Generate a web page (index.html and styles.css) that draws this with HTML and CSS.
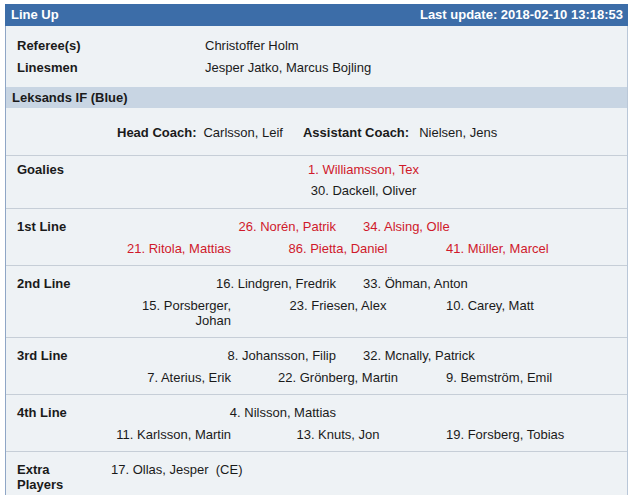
FILE: index.html
```html
<!DOCTYPE html>
<html>
<head>
<meta charset="utf-8">
<link rel="stylesheet" href="styles.css">
</head>
<body>
<div class="box">
  <div class="hdr"><span>Line Up</span><span>Last update: 2018-02-10 13:18:53</span></div>
  <div class="officials">
    <div class="orow"><span class="olbl">Referee(s)</span><span>Christoffer Holm</span></div>
    <div class="orow"><span class="olbl">Linesmen</span><span>Jesper Jatko, Marcus Bojling</span></div>
  </div>
  <div class="team">Leksands IF (Blue)</div>
  <div class="coaches">
    <span class="cl">Head Coach:</span><span class="cv">Carlsson, Leif</span>
    <span class="cl cl2">Assistant Coach:</span><span class="cv cv2">Nielsen, Jens</span>
  </div>
  <div class="sec goalies">
    <div class="lbl">Goalies</div>
    <div class="lines">
      <div class="rowc red">1. Williamsson, Tex</div>
      <div class="rowc">30. Dackell, Oliver</div>
    </div>
  </div>
  <div class="sec">
    <div class="lbl">1st Line</div>
    <div class="lines">
      <div class="rowa red"><span class="l">26. Norén, Patrik</span><span class="r">34. Alsing, Olle</span></div>
      <div class="rowb red"><span class="a">21. Ritola, Mattias</span><span class="b">86. Pietta, Daniel</span><span class="c">41. Müller, Marcel</span></div>
    </div>
  </div>
  <div class="sec">
    <div class="lbl">2nd Line</div>
    <div class="lines">
      <div class="rowa"><span class="l">16. Lindgren, Fredrik</span><span class="r">33. Öhman, Anton</span></div>
      <div class="rowb"><span class="a">15. Porsberger, Johan</span><span class="b">23. Friesen, Alex</span><span class="c">10. Carey, Matt</span></div>
    </div>
  </div>
  <div class="sec">
    <div class="lbl">3rd Line</div>
    <div class="lines">
      <div class="rowa"><span class="l">8. Johansson, Filip</span><span class="r">32. Mcnally, Patrick</span></div>
      <div class="rowb"><span class="a">7. Aterius, Erik</span><span class="b">22. Grönberg, Martin</span><span class="c">9. Bemström, Emil</span></div>
    </div>
  </div>
  <div class="sec">
    <div class="lbl">4th Line</div>
    <div class="lines">
      <div class="rowa"><span class="l">4. Nilsson, Mattias</span><span class="r"></span></div>
      <div class="rowb"><span class="a">11. Karlsson, Martin</span><span class="b">13. Knuts, Jon</span><span class="c">19. Forsberg, Tobias</span></div>
    </div>
  </div>
  <div class="sec extra">
    <div class="lbl xlbl">Extra Players</div>
    <div class="xval">17. Ollas, Jesper&nbsp; (CE)</div>
  </div>
</div>
</body>
</html>
```

FILE: styles.css
```css
html, body {
  margin: 0;
  padding: 0;
  background: #ffffff;
}
body {
  font-family: "Liberation Sans", Arial, sans-serif;
  font-size: 13px;
  color: #1a1a1a;
}
.box {
  margin: 4px 0 0 5px;
  width: 623px;
  box-sizing: border-box;
  background: #eef2f5;
  border-left: 1px solid #8fa6c6;
  border-right: 1px solid #b9c7d8;
  min-height: 491px;
}
.hdr {
  display: flex;
  justify-content: space-between;
  height: 22px;
  line-height: 22px;
  background: #3c6da8;
  color: #ffffff;
  font-weight: bold;
  padding: 0 5px 0 6px;
  margin-left: -1px;
  margin-right: -1px;
}
.officials {
  padding: 9px 0 8px 11px;
}
.orow {
  display: flex;
  line-height: 16px;
  padding: 3px 0;
}
.olbl {
  width: 188px;
  flex: none;
  font-weight: bold;
}
.team {
  height: 21px;
  line-height: 21px;
  background: #c8d5e3;
  font-weight: bold;
  padding-left: 6px;
}
.coaches {
  display: flex;
  padding: 14px 0 11px 111px;
  line-height: 16px;
}
.coaches > span {
  padding: 3px 0;
}
.cl {
  font-weight: bold;
}
.cv {
  margin-left: 7px;
}
.cl2 {
  margin-left: 20px;
}
.cv2 {
  margin-left: 10px;
}
.sec {
  display: flex;
  border-top: 1px solid #c6ced7;
  padding: 7px 0 6px 11px;
}
.goalies {
  padding-top: 3px;
  padding-bottom: 7px;
}
.extra {
  padding-bottom: 7px;
}
.lbl {
  width: 83px;
  flex: none;
  font-weight: bold;
  line-height: 15px;
  padding-top: 3px;
}
.lines {
  flex: 1;
}
.lines > div {
  line-height: 15px;
}
.rowc {
  text-align: center;
  padding: 3px 0;
}
.rowa {
  display: grid;
  grid-template-columns: 249px 1fr;
}
.rowa > span {
  padding: 3px 0 4px;
}
.rowa .l {
  text-align: right;
  padding-right: 13px;
}
.rowa .r {
  padding-left: 14px;
}
.rowb {
  display: grid;
  grid-template-columns: 141px 194px 1fr;
}
.rowb > span {
  padding: 3px 0;
}
.rowb .a {
  text-align: right;
  padding: 3px 10px;
}
.rowb .b {
  text-align: center;
}
.rowb .c {
  padding-left: 11px;
}
.red {
  color: #d0192b;
}
.xlbl {
  width: 80px;
}
.xval {
  margin-left: 14px;
  line-height: 15px;
  padding-top: 3px;
}
```
